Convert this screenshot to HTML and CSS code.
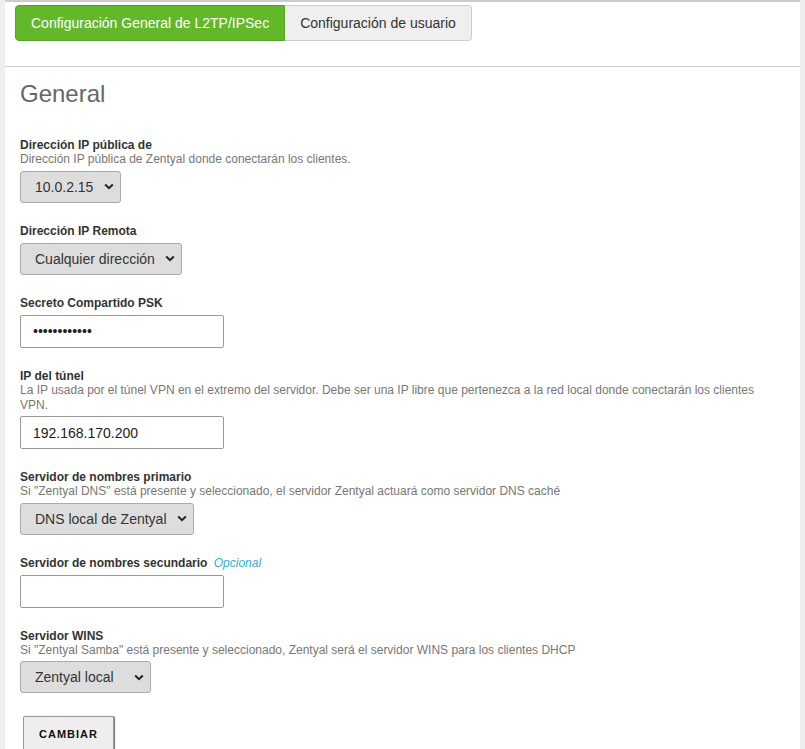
FILE: index.html
```html
<!DOCTYPE html>
<html lang="es">
<head>
<meta charset="utf-8">
<title>L2TP/IPSec</title>
<link rel="stylesheet" href="styles.css">
</head>
<body>
<div class="panel">
  <div class="tabs">
    <a class="tab tab-active">Configuración General de L2TP/IPSec</a>
    <a class="tab">Configuración de usuario</a>
  </div>
  <div class="content">
    <h2 class="title">General</h2>
    <div class="field">
      <div class="label">Dirección IP pública de</div>
      <div class="desc">Dirección IP pública de Zentyal donde conectarán los clientes.</div>
      <select class="select w1"><option>10.0.2.15</option></select>
    </div>
    <div class="field">
      <div class="label">Dirección IP Remota</div>
      <select class="select w2"><option>Cualquier dirección</option></select>
    </div>
    <div class="field">
      <div class="label">Secreto Compartido PSK</div>
      <input class="input" type="password" value="abcdefghijkl">
    </div>
    <div class="field">
      <div class="label">IP del túnel</div>
      <div class="desc">La IP usada por el túnel VPN en el extremo del servidor. Debe ser una IP libre que pertenezca a la red local donde conectarán los clientes VPN.</div>
      <input class="input" type="text" value="192.168.170.200">
    </div>
    <div class="field">
      <div class="label">Servidor de nombres primario</div>
      <div class="desc">Si "Zentyal DNS" está presente y seleccionado, el servidor Zentyal actuará como servidor DNS caché</div>
      <select class="select w3"><option>DNS local de Zentyal</option></select>
    </div>
    <div class="field">
      <div class="label">Servidor de nombres secundario <span class="optional">Opcional</span></div>
      <input class="input" type="text" value="">
    </div>
    <div class="field">
      <div class="label">Servidor WINS</div>
      <div class="desc">Si "Zentyal Samba" está presente y seleccionado, Zentyal será el servidor WINS para los clientes DHCP</div>
      <select class="select w4"><option>Zentyal local</option></select>
    </div>
    <button class="btn" type="button">CAMBIAR</button>
  </div>
</div>
</body>
</html>
```
FILE: styles.css
```css
html, body {
  margin: 0;
  padding: 0;
  height: 100%;
}
body {
  background: #eeeeee;
  font-family: "Liberation Sans", Arial, sans-serif;
  color: #333;
  overflow: hidden;
}
.panel {
  margin: 0 5px;
  background: #fff;
  border-top: 2px solid #cccccc;
  min-height: 100%;
  box-sizing: border-box;
}
.tabs {
  display: flex;
  padding: 3px 10px 0;
  box-sizing: border-box;
  border-bottom: 1px solid #cccccc;
  height: 65px;
  align-items: flex-start;
}
.tab {
  display: block;
  height: 36px;
  line-height: 34px;
  box-sizing: border-box;
  padding: 0 15px;
  font-size: 14px;
  border: 1px solid #cccccc;
  background: #efefef;
  color: #333;
}
.tab:first-child {
  border-radius: 4px 0 0 4px;
}
.tab:last-child {
  border-radius: 0 4px 4px 0;
  border-left: none;
}
.tab-active {
  background: #63b82a;
  border-color: #55a523;
  color: #fff;
}
.content {
  padding: 0 17px 0 15px;
}
.title {
  font-size: 24px;
  font-weight: normal;
  color: #666;
  margin: 13px 0 0;
  line-height: 28px;
}
.field {
  margin-top: 22px;
}
.content .field:first-of-type {
  margin-top: 31px;
}
.label {
  font-size: 12px;
  font-weight: bold;
  line-height: 13px;
  color: #333;
}
.optional {
  font-weight: normal;
  font-style: italic;
  color: #2cb2d9;
  margin-left: 3px;
}
.desc {
  font-size: 12px;
  line-height: 15px;
  color: #777;
}
.select {
  display: block;
  margin-top: 5px;
  height: 32px;
  box-sizing: border-box;
  appearance: none;
  -webkit-appearance: none;
  background-color: #dddddd;
  background-image: url("data:image/svg+xml;utf8,<svg xmlns='http://www.w3.org/2000/svg' width='10' height='7' viewBox='0 0 10 7'><path d='M1.2 1.5 L5 5.2 L8.8 1.5' fill='none' stroke='%23222' stroke-width='2'/></svg>");
  background-repeat: no-repeat;
  background-position: right 6px center;
  border: 1px solid #aaaaaa;
  border-radius: 3px;
  font-family: "Liberation Sans", Arial, sans-serif;
  font-size: 14px;
  color: #333;
  padding: 0 0 0 14px;
}
.desc + .select,
.desc + .input {
  margin-top: 3.5px;
}
.w1 { width: 101px; }
.w2 { width: 162px; }
.w3 { width: 174px; }
.w4 { width: 131px; }
.input {
  display: block;
  margin-top: 5px;
  width: 204px;
  height: 33px;
  box-sizing: border-box;
  border: 1px solid #999;
  border-radius: 2px;
  padding: 0 12px;
  font-family: "Liberation Sans", Arial, sans-serif;
  font-size: 14px;
  color: #222;
  background: #fff;
}
.btn {
  display: block;
  margin: 23px 0 0 3px;
  width: 91px;
  height: 38px;
  box-sizing: border-box;
  background: #eeeeee;
  border: 1px solid #999;
  border-bottom: none;
  box-shadow: 1px 0 1px #777;
  border-radius: 2px 2px 0 0;
  font-family: "Liberation Sans", Arial, sans-serif;
  font-size: 11px;
  font-weight: bold;
  letter-spacing: 1px;
  color: #111;
  padding: 0 0 3px;
}
```
